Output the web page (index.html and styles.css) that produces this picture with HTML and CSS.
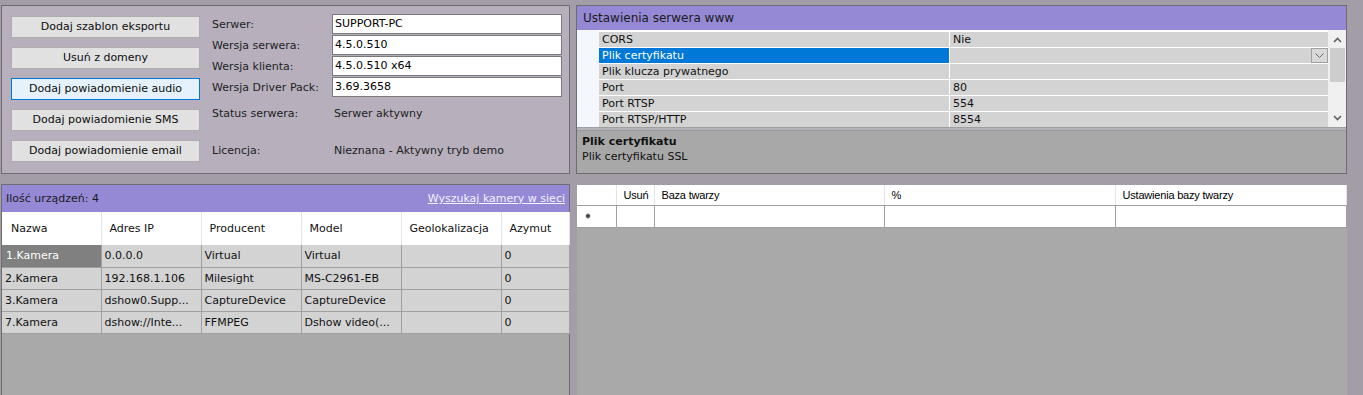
FILE: index.html
```html
<!DOCTYPE html>
<html lang="pl">
<head>
  <meta charset="UTF-8">
  <title>Serwer</title>
  <link rel="stylesheet" href="styles.css">
</head>
<body>
  <div class="screen">
    <div class="top">
      <section class="panel server">
        <div class="actions">
          <div class="btn">Dodaj szablon eksportu</div>
          <div class="btn">Usuń z domeny</div>
          <div class="btn active">Dodaj powiadomienie audio</div>
          <div class="btn">Dodaj powiadomienie SMS</div>
          <div class="btn">Dodaj powiadomienie email</div>
        </div>
        <div class="info">
          <div class="field"><span class="lbl">Serwer:</span><span class="input">SUPPORT-PC</span></div>
          <div class="field"><span class="lbl">Wersja serwera:</span><span class="input">4.5.0.510</span></div>
          <div class="field"><span class="lbl">Wersja klienta:</span><span class="input">4.5.0.510 x64</span></div>
          <div class="field"><span class="lbl">Wersja Driver Pack:</span><span class="input">3.69.3658</span></div>
          <div class="line status"><span class="lbl">Status serwera:</span><span class="val">Serwer aktywny</span></div>
          <div class="line license"><span class="lbl">Licencja:</span><span class="val">Nieznana - Aktywny tryb demo</span></div>
        </div>
      </section>

      <section class="panel web">
        <div class="web-head">Ustawienia serwera www</div>
        <div class="props">
          <div class="gutter"></div>
          <div class="plist">
            <div class="prop"><span class="pname">CORS</span><span class="pval">Nie</span></div>
            <div class="prop sel"><span class="pname">Plik certyfikatu</span><span class="pval">
              <span class="drop"><svg width="9" height="5" viewBox="0 0 9 5"><polyline points="0.5,0.5 4.5,4.5 8.5,0.5" fill="none" stroke="#6a6a6a" stroke-width="1"/></svg></span>
            </span></div>
            <div class="prop"><span class="pname">Plik klucza prywatnego</span><span class="pval"></span></div>
            <div class="prop"><span class="pname">Port</span><span class="pval">80</span></div>
            <div class="prop"><span class="pname">Port RTSP</span><span class="pval">554</span></div>
            <div class="prop"><span class="pname">Port RTSP/HTTP</span><span class="pval">8554</span></div>
          </div>
          <div class="vscroll">
            <svg class="arrow" width="9" height="6" viewBox="0 0 9 6"><polyline points="1,5 4.5,1.5 8,5" fill="none" stroke="#606060" stroke-width="1.6"/></svg>
            <div class="thumb"></div>
            <svg class="arrow down" width="9" height="6" viewBox="0 0 9 6"><polyline points="1,1 4.5,4.5 8,1" fill="none" stroke="#606060" stroke-width="1.6"/></svg>
          </div>
        </div>
        <div class="desc">
          <div class="desc-title">Plik certyfikatu</div>
          <div>Plik certyfikatu SSL</div>
        </div>
      </section>
    </div>

    <div class="bottom">
      <section class="devices">
        <div class="dev-head">
          <span>Ilość urządzeń: 4</span>
          <a href="#" class="search">Wyszukaj kamery w sieci</a>
        </div>
        <table class="cams">
          <thead>
            <tr><th class="first">Nazwa</th><th>Adres IP</th><th>Producent</th><th>Model</th><th>Geolokalizacja</th><th class="last">Azymut</th></tr>
          </thead>
          <tbody>
            <tr><td class="picked">1.Kamera</td><td>0.0.0.0</td><td>Virtual</td><td>Virtual</td><td></td><td>0</td></tr>
            <tr><td>2.Kamera</td><td>192.168.1.106</td><td>Milesight</td><td>MS-C2961-EB</td><td></td><td>0</td></tr>
            <tr><td>3.Kamera</td><td>dshow0.Supp...</td><td>CaptureDevice</td><td>CaptureDevice</td><td></td><td>0</td></tr>
            <tr><td>7.Kamera</td><td>dshow://Inte...</td><td>FFMPEG</td><td>Dshow video(...</td><td></td><td>0</td></tr>
          </tbody>
        </table>
      </section>

      <section class="faces">
        <table class="fgrid">
          <thead>
            <tr><th class="rh"></th><th class="c-del">Usuń</th><th class="c-base">Baza twarzy</th><th class="c-pct">%</th><th>Ustawienia bazy twarzy</th></tr>
          </thead>
          <tbody>
            <tr>
              <td class="rh"><svg width="6" height="6" viewBox="0 0 6 6"><path d="M3 0.5v5M0.8 1.8l4.4 2.4M0.8 4.2l4.4-2.4" stroke="#3a3a3a" stroke-width="1.3"/></svg></td>
              <td></td><td></td><td></td><td></td>
            </tr>
          </tbody>
        </table>
      </section>
    </div>
  </div>
</body>
</html>
```

FILE: styles.css
```css
* {
  box-sizing: border-box;
}
html, body {
  margin: 0;
  padding: 0;
}
body {
  background: #a29da7;
  font-family: "DejaVu Sans", sans-serif;
  font-size: 11px;
  color: #111;
}
.screen {
  width: 1363px;
  height: 395px;
  overflow: hidden;
}
.top {
  display: flex;
  gap: 6px;
  padding: 5px 0 0 1px;
}
.panel {
  height: 169px;
  border: 1px solid #6f6b73;
}

/* server info */
.server {
  width: 569px;
  background: #b7b0bc;
  display: flex;
  padding: 8px 0 0 9px;
}
.actions {
  display: flex;
  flex-direction: column;
  gap: 9px;
  width: 189px;
  margin-top: 2px;
}
.btn {
  height: 22px;
  border: 1px solid #adadad;
  background: #e1e1e1;
  text-align: center;
  line-height: 20px;
  color: #0d0d0d;
}
.btn.active {
  border-color: #0078d7;
  background: #e5f1fb;
}
.info {
  margin-left: 12px;
}
.field {
  display: flex;
  align-items: center;
  height: 20px;
  margin-bottom: 1px;
}
.lbl {
  width: 120px;
  color: #222;
}
.input {
  width: 230px;
  height: 20px;
  border: 1px solid #7a7a7a;
  background: #fff;
  padding-left: 2px;
  line-height: 18px;
  color: #000;
}
.line {
  display: flex;
  align-items: center;
  height: 20px;
}
.line .val {
  padding-left: 2px;
  color: #222;
}
.status {
  margin-top: 6px;
}
.license {
  margin-top: 17px;
}

/* web server settings */
.web {
  width: 771px;
  background: #b5b3b8;
  display: flex;
  flex-direction: column;
}
.web-head {
  height: 24px;
  background: #9589d5;
  font-size: 12px;
  line-height: 24px;
  padding-left: 6px;
  color: #1a1a1a;
}
.props {
  display: flex;
  height: 98px;
  border-bottom: 1px solid #a0a0a0;
}
.gutter {
  width: 22px;
  background: #f4f7fb;
}
.plist {
  width: 729px;
  background: #fff;
  padding-top: 1px;
}
.prop {
  display: flex;
  height: 16px;
  border-top: 1px solid #fff;
  line-height: 15px;
}
.pname {
  width: 350px;
  background: #d3d3d3;
  padding-left: 3px;
}
.pval {
  flex: 1;
  background: #d3d3d3;
  border-left: 1px solid #fff;
  padding-left: 3px;
  display: flex;
  justify-content: space-between;
}
.sel .pname {
  background: #0078d7;
  color: #fff;
}
.sel .pval {
  justify-content: flex-end;
}
.drop {
  width: 17px;
  height: 15px;
  border: 1px solid #a0a0a0;
  background: #d8d8d8;
  display: flex;
  align-items: center;
  justify-content: center;
}
.vscroll {
  width: 18px;
  background: #f0f0f0;
  display: flex;
  flex-direction: column;
  align-items: center;
  padding-top: 7px;
}
.thumb {
  width: 15px;
  height: 34px;
  margin-top: 5px;
  background: #cdcdcd;
}
.arrow.down {
  margin-top: 33px;
}
.desc {
  flex: 1;
  margin-top: 2px;
  background: #a8a8a8;
  border-top: 1px solid #9a9a9a;
  padding: 3px 5px;
  line-height: 15px;
  color: #111;
}
.desc-title {
  font-weight: bold;
}

/* bottom */
.bottom {
  display: flex;
  gap: 6px;
  padding: 10px 0 0 1px;
}
.devices {
  width: 569px;
  height: 211px;
  border: 1px solid #6f6b73;
  border-bottom: 0;
  background: #a9a9a9;
}
.dev-head {
  height: 27px;
  background: #9589d5;
  display: flex;
  justify-content: space-between;
  align-items: center;
  padding: 0 4px 0 4px;
  color: #1a1a1a;
}
.search {
  color: #f4f2ff;
  text-decoration: underline;
}
.cams {
  border-collapse: collapse;
  table-layout: fixed;
  width: 567px;
}
.cams th {
  height: 33px;
  background: #fff;
  font-weight: normal;
  text-align: left;
  padding: 0 0 0 8px;
  border-right: 1px solid #e4e4e4;
  width: 100px;
  color: #111;
}
.cams th.first {
  width: 99px;
  padding-left: 9px;
}
.cams th.last {
  width: 68px;
}
.cams td {
  height: 22px;
  background: #d3d3d3;
  border-right: 1px solid #a0a0a0;
  border-bottom: 1px solid #a0a0a0;
  padding: 0 0 0 3px;
  white-space: nowrap;
  overflow: hidden;
}
.cams td.picked {
  background: #808080;
  color: #fff;
  padding-left: 4px;
}

.faces {
  width: 771px;
  height: 210px;
  margin-top: 1px;
  border-left: 1px solid #a0a0a0;
  background: #a9a9a9;
}
.fgrid {
  border-collapse: collapse;
  table-layout: fixed;
  width: 770px;
  font-family: "Liberation Sans", Arial, sans-serif;
  font-size: 11px;
  letter-spacing: -0.2px;
}
.fgrid th {
  height: 20px;
  background: #fff;
  font-weight: normal;
  text-align: left;
  padding: 0 0 0 7px;
  border-right: 1px solid #e4e4e4;
  border-bottom: 1px solid #a0a0a0;
  color: #000;
}
.fgrid td {
  height: 22px;
  background: #fff;
  border-right: 1px solid #a0a0a0;
  border-bottom: 1px solid #a0a0a0;
}
.fgrid .rh {
  width: 39px;
  padding: 0 0 0 8px;
}
.fgrid td.rh svg {
  display: block;
}
.fgrid .c-del {
  width: 38px;
}
.fgrid .c-base {
  width: 230px;
}
.fgrid .c-pct {
  width: 231px;
}
```
